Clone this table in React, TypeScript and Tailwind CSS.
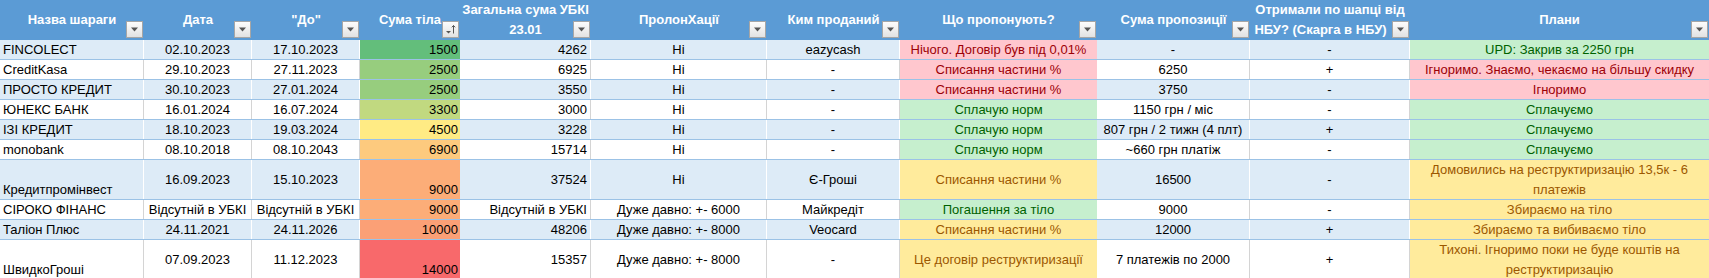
import React from 'react'

type Fill = 'bad' | 'good' | 'neutral' | undefined

type Row = {
    tall?: boolean
    name: string
    from: string
    to: string
    body: number
    total: string
    prolong: string
    soldBy: string
    offer: [string, Fill]
    offerSum: string
    nbu: string
    plan: [string[], Fill]
}

const rows: Row[] = [
    { name: 'FINCOLECT', from: '02.10.2023', to: '17.10.2023', body: 1500, total: '4262', prolong: 'Ні', soldBy: 'eazycash', offer: ['Нічого. Договір був під 0,01%', 'bad'], offerSum: '-', nbu: '-', plan: [['UPD: Закрив за 2250 грн'], 'good'] },
    { name: 'CreditKasa', from: '29.10.2023', to: '27.11.2023', body: 2500, total: '6925', prolong: 'Ні', soldBy: '-', offer: ['Списання частини %', 'bad'], offerSum: '6250', nbu: '+', plan: [['Ігноримо. Знаємо, чекаємо на більшу скидку'], 'bad'] },
    { name: 'ПРОСТО КРЕДИТ', from: '30.10.2023', to: '27.01.2024', body: 2500, total: '3550', prolong: 'Ні', soldBy: '-', offer: ['Списання частини %', 'bad'], offerSum: '3750', nbu: '-', plan: [['Ігноримо'], 'bad'] },
    { name: 'ЮНЕКС БАНК', from: '16.01.2024', to: '16.07.2024', body: 3300, total: '3000', prolong: 'Ні', soldBy: '-', offer: ['Сплачую норм', 'good'], offerSum: '1150 грн / міс', nbu: '-', plan: [['Сплачуємо'], 'good'] },
    { name: 'ІЗІ КРЕДИТ', from: '18.10.2023', to: '19.03.2024', body: 4500, total: '3228', prolong: 'Ні', soldBy: '-', offer: ['Сплачую норм', 'good'], offerSum: '807 грн / 2 тижн (4 плт)', nbu: '+', plan: [['Сплачуємо'], 'good'] },
    { name: 'monobank', from: '08.10.2018', to: '08.10.2043', body: 6900, total: '15714', prolong: 'Ні', soldBy: '-', offer: ['Сплачую норм', 'good'], offerSum: '~660 грн платіж', nbu: '-', plan: [['Сплачуємо'], 'good'] },
    { tall: true, name: 'Кредитпромінвест', from: '16.09.2023', to: '15.10.2023', body: 9000, total: '37524', prolong: 'Ні', soldBy: 'Є-Гроші', offer: ['Списання частини %', 'neutral'], offerSum: '16500', nbu: '-', plan: [['Домовились на реструктиризацію 13,5к  - 6', 'платежів'], 'neutral'] },
    { name: 'СІРОКО ФІНАНС', from: 'Відсутній в УБКІ', to: 'Відсутній в УБКІ', body: 9000, total: 'Відсутній в УБКІ', prolong: 'Дуже давно: +- 6000', soldBy: 'Майкредіт', offer: ['Погашення за тіло', 'good'], offerSum: '9000', nbu: '-', plan: [['Збираємо на тіло'], 'neutral'] },
    { name: 'Таліон Плюс', from: '24.11.2021', to: '24.11.2026', body: 10000, total: '48206', prolong: 'Дуже давно: +- 8000', soldBy: 'Veocard', offer: ['Списання частини %', 'neutral'], offerSum: '12000', nbu: '+', plan: [['Збираємо та вибиваємо тіло'], 'neutral'] },
    { tall: true, name: 'ШвидкоГроші', from: '07.09.2023', to: '11.12.2023', body: 14000, total: '15357', prolong: 'Дуже давно: +- 8000', soldBy: '-', offer: ['Це договір реструктиризації', 'neutral'], offerSum: '7 платежів по 2000', nbu: '+', plan: [['Тихоні. Ігноримо поки не буде коштів на', 'реструктиризацію'], 'neutral'] },
]

const fillClass = (f: Fill) =>
    f === 'bad' ? 'bg-[#ffc7ce] text-[#9c0006]' : f === 'good' ? 'bg-[#c6efce] text-[#006100]' : f === 'neutral' ? 'bg-[#ffeb9c] text-[#9c5700]' : ''

// excel-style 3 colour scale: green -> yellow -> red
const scale = (v: number) => {
    const lo = [99, 190, 123], mid = [255, 235, 132], hi = [248, 105, 107]
    const [a, b, t] = v <= 4500 ? [lo, mid, (v - 1500) / 3000] : [mid, hi, (v - 4500) / 9500]
    const c = a.map((x, i) => Math.round(x + (b[i] - x) * t))
    return `rgb(${c[0]},${c[1]},${c[2]})`
}

const FilterBtn = ({ sorted }: { sorted?: boolean }) => (
    <span className='absolute right-[1px] bottom-[2px] w-[17px] h-[17px] border border-[#a6a6a6] bg-gradient-to-b from-[#fdfdfd] to-[#e2e2e2] flex items-center justify-center'>
        {sorted ? (
            <svg width='13' height='11' viewBox='0 0 13 11'>
                <path d='M2 7h5l-2.5 2.5z' fill='#555' />
                <path d='M9.5 1.5v8M7.8 3.3l1.7-1.8 1.7 1.8' stroke='#555' strokeWidth='1' fill='none' />
            </svg>
        ) : (
            <svg width='9' height='5' viewBox='0 0 9 5'>
                <path d='M1 0.5h7l-3.5 4z' fill='#555' />
            </svg>
        )}
    </span>
)

const Head = ({ lines, sorted, pad }: { lines: string[]; sorted?: boolean; pad?: boolean }) => (
    <div className='relative h-[40px] flex flex-col items-center justify-center text-white font-bold leading-[20px] whitespace-nowrap'>
        {lines.map((l, i) => <span key={l} className={pad && i === 1 ? 'pr-[19px]' : ''}>{l}</span>)}
        <FilterBtn sorted={sorted} />
    </div>
)

const headers: [string[], boolean?, boolean?][] = [
    [['Назва шараги']], [['Дата']], [['"До"']], [['Сума тіла'], true], [['Загальна сума УБКІ', '23.01']],
    [['ПролонХації']], [['Ким проданий']], [['Що пропонують?']], [['Сума пропозиції']],
    [['Отримали по шапці від', 'НБУ? (Скарга в НБУ)'], false, true], [['Плани']],
]

const Cell = ({ className = '', children, style }: { className?: string; children: React.ReactNode; style?: React.CSSProperties }) => (
    <div className={`flex whitespace-nowrap overflow-hidden px-[3px] ${className}`} style={style}>{children}</div>
)

const App = () => {
    return (
        <main className='w-[1709px] h-[278px] overflow-hidden bg-white text-black text-[13px] leading-[19px]' style={{ fontFamily: '"Liberation Sans", Arial, sans-serif' }}>
            <div className='grid grid-cols-[144px_108px_108px_100px_131px_176px_133px_197px_153px_160px_299px] bg-[#5b9bd5]'>
                {headers.map(([l, s, p], i) => <Head key={i} lines={l} sorted={s} pad={p} />)}
            </div>
            {rows.map((r, i) => {
                const band = i % 2 === 0
                const line = band ? 'border-r border-white' : 'border-r border-[#d4d4d4]'
                const tall = r.tall
                return (
                    <div key={r.name} className={`grid grid-cols-[144px_108px_108px_100px_131px_176px_133px_197px_153px_160px_299px] border-b border-[#9bc2e6] ${tall ? 'h-[40px]' : 'h-[20px]'} ${band ? 'bg-[#ddebf7]' : 'bg-white'}`}>
                        <Cell className={`${line} items-end`}>{r.name}</Cell>
                        <Cell className={`${line} items-center justify-center`}>{r.from}</Cell>
                        <Cell className={`${line} items-center justify-center`}>{r.to}</Cell>
                        <Cell className='items-end justify-end pr-[2px]' style={{ background: scale(r.body) }}>{r.body}</Cell>
                        <Cell className={`${line} items-center justify-end`}>{r.total}</Cell>
                        <Cell className={`${line} items-center justify-center`}>{r.prolong}</Cell>
                        <Cell className={`${line} items-center justify-center`}>{r.soldBy}</Cell>
                        <Cell className={`items-center justify-center ${fillClass(r.offer[1])}`}>{r.offer[0]}</Cell>
                        <Cell className={`${line} items-center justify-center`}>{r.offerSum}</Cell>
                        <Cell className={`${line} items-center justify-center`}>{r.nbu}</Cell>
                        <Cell className={`flex-col items-center justify-center leading-[20px] ${fillClass(r.plan[1])}`}>
                            {r.plan[0].map((p) => <span key={p}>{p}</span>)}
                        </Cell>
                    </div>
                )
            })}
        </main>
    )
}

export default App
